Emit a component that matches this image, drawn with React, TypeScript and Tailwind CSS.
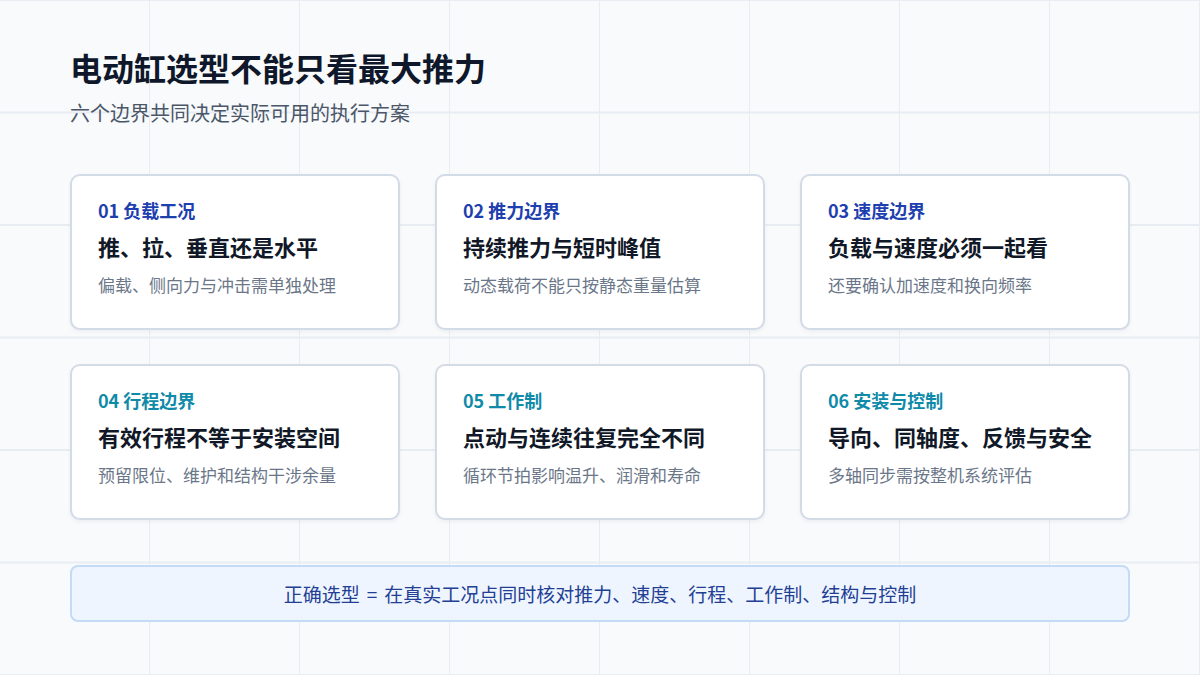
import * as React from 'react';

interface Boundary {
    no: string;
    tag: string;
    title: string;
    note: string;
}

const boundaries: Boundary[] = [
    { no: '01', tag: '负载工况', title: '推、拉、垂直还是水平', note: '偏载、侧向力与冲击需单独处理' },
    { no: '02', tag: '推力边界', title: '持续推力与短时峰值', note: '动态载荷不能只按静态重量估算' },
    { no: '03', tag: '速度边界', title: '负载与速度必须一起看', note: '还要确认加速度和换向频率' },
    { no: '04', tag: '行程边界', title: '有效行程不等于安装空间', note: '预留限位、维护和结构干涉余量' },
    { no: '05', tag: '工作制', title: '点动与连续往复完全不同', note: '循环节拍影响温升、润滑和寿命' },
    { no: '06', tag: '安装与控制', title: '导向、同轴度、反馈与安全', note: '多轴同步需按整机系统评估' },
];

function BoundaryCard({ item, index }: { item: Boundary; index: number }) {
    const tagColor = index < 3 ? 'text-[#1e40af]' : 'text-[#0f8aa9]';
    return (
        <div className="h-[156px] rounded-[10px] border-2 border-[#d3dbe6] bg-white px-[26px] pt-[22px] shadow-[0_2px_4px_rgba(15,23,42,0.05)]">
            <div className={`text-[18px] leading-[24px] font-bold ${tagColor}`}>
                {item.no} {item.tag}
            </div>
            <div className="mt-[9px] text-[22px] leading-[30px] font-bold text-[#111827]">
                {item.title}
            </div>
            <div className="mt-[12px] text-[17px] leading-[24px] text-[#6b7789]">
                {item.note}
            </div>
        </div>
    );
}

export default function App() {
    return (
        <div
            className="w-[1200px] h-[675px] overflow-hidden bg-[#f8fafc] bg-[linear-gradient(to_right,#e8edf3_1.5px,transparent_1.5px),linear-gradient(to_bottom,#e8edf3_1.5px,transparent_1.5px)] bg-[size:150px_112.5px] bg-[position:-1px_-1px] px-[70px] pt-[47px]"
            style={{ fontFamily: '"Noto Sans CJK SC", "Noto Sans", sans-serif' }}
        >
            {/* Header */}
            <h1 className="text-[32px] leading-[40px] font-bold text-[#0f172a]">
                电动缸选型不能只看最大推力
            </h1>
            <p className="mt-[12px] text-[20px] leading-[28px] text-[#4b5668]">
                六个边界共同决定实际可用的执行方案
            </p>

            {/* Cards */}
            <div className="mt-[47px] grid grid-cols-3 gap-x-[35px] gap-y-[34px]">
                {boundaries.map((item, i) => (
                    <BoundaryCard key={item.no} item={item} index={i} />
                ))}
            </div>

            {/* Summary */}
            <div className="mt-[45px] flex h-[57px] items-center justify-center rounded-[8px] border-2 border-[#c3dbf7] bg-[#eef5ff]">
                <span className="text-[19px] leading-[28px] text-[#233f94]">
                    正确选型<span className="mx-[7px]">=</span>在真实工况点同时核对推力、速度、行程、工作制、结构与控制
                </span>
            </div>
        </div>
    );
}
